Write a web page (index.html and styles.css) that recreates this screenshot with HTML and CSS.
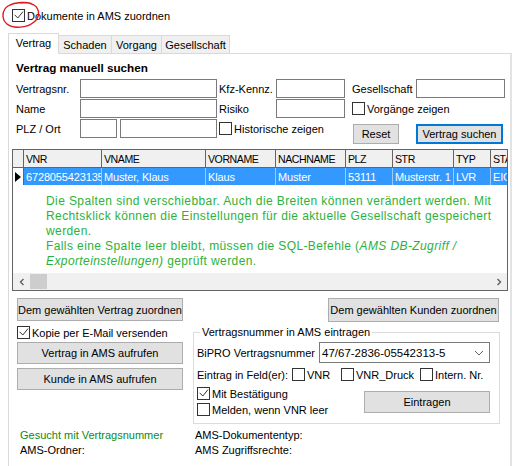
FILE: index.html
```html
<!DOCTYPE html>
<html>
<head>
<meta charset="utf-8">
<link rel="stylesheet" href="styles.css">
</head>
<body>
<div class="app">
  <svg class="annot" width="44" height="32" viewBox="0 0 44 32"><path d="M34 5 C27 1 15 2 8 6 C2 10 1 19 7 24 C13 29 27 28 34 22 C40 17 40 9 34 5 C30 2 25 2 21 3" fill="none" stroke="#e2161d" stroke-width="1.4" stroke-linecap="round"/></svg>

  <div class="topbar">
    <div class="cb"><span class="box"><svg viewBox="0 0 11 11"><path d="M1.6 4.8 L4.8 8 L10 1.6" fill="none" stroke="#333" stroke-width="1"/></svg></span><span>Dokumente in AMS zuordnen</span></div>
  </div>

  <div class="tabs">
    <div class="tab active">Vertrag</div>
    <div class="tab t2">Schaden</div>
    <div class="tab t3">Vorgang</div>
    <div class="tab t4">Gesellschaft</div>
  </div>

  <div class="panel">
    <div class="title">Vertrag manuell suchen</div>

    <div class="form">
      <div class="row">
        <span class="lbl">Vertragsnr.</span>
        <span class="in w137"></span>
        <span class="lbl2">Kfz-Kennz.</span>
        <span class="in w69"></span>
        <span class="lbl3">Gesellschaft</span>
        <span class="in w89"></span>
      </div>
      <div class="row">
        <span class="lbl">Name</span>
        <span class="in w137"></span>
        <span class="lbl2">Risiko</span>
        <span class="in w69"></span>
        <div class="cb ml7"><span class="box"></span><span>Vorgänge zeigen</span></div>
      </div>
      <div class="row row3">
        <span class="lbl h19">PLZ / Ort</span>
        <span class="in w37"></span>
        <span class="in w97 ml3"></span>
        <div class="cb hist"><span class="box"></span><span>Historische zeigen</span></div>
        <div class="btn reset">Reset</div>
        <div class="btn search">Vertrag suchen</div>
      </div>
    </div>

    <div class="grid">
      <div class="ghead">
        <div class="c sel"></div>
        <div class="c cw1">VNR</div>
        <div class="c cw2">VNAME</div>
        <div class="c cw3">VORNAME</div>
        <div class="c cw4">NACHNAME</div>
        <div class="c cw5">PLZ</div>
        <div class="c cw6">STR</div>
        <div class="c cw7">TYP</div>
        <div class="c cw8">STATUS</div>
      </div>
      <div class="grow">
        <div class="c sel"><span class="tri"></span></div>
        <div class="c cw1">6728055423135</div>
        <div class="c cw2">Muster, Klaus</div>
        <div class="c cw3">Klaus</div>
        <div class="c cw4">Muster</div>
        <div class="c cw5">53111</div>
        <div class="c cw6">Musterstr. 1</div>
        <div class="c cw7">LVR</div>
        <div class="c cw8">EIGEN</div>
      </div>
      <div class="gbody">
        <p class="msg">Die Spalten sind verschiebbar. Auch die Breiten können verändert werden. Mit<br>Rechtsklick können die Einstellungen für die aktuelle Gesellschaft gespeichert<br>werden.<br>Falls eine Spalte leer bleibt, müssen die SQL-Befehle (<i>AMS DB-Zugriff /<br>Exporteinstellungen)</i> geprüft werden.</p>
      </div>
      <div class="hscroll">
        <div class="sbtn"><svg width="8" height="8" viewBox="0 0 8 8"><path d="M5.5 1 L2.5 4 L5.5 7" fill="none" stroke="#606060" stroke-width="1.4"/></svg></div>
        <div class="thumb"></div>
        <div class="strack"></div>
        <div class="sbtn"><svg width="8" height="8" viewBox="0 0 8 8"><path d="M2.5 1 L5.5 4 L2.5 7" fill="none" stroke="#606060" stroke-width="1.4"/></svg></div>
      </div>
    </div>

    <div class="bottom">
      <div class="lcol">
        <div class="btn b23">Dem gewählten Vertrag zuordnen</div>
        <div class="cb mt5"><span class="box"><svg viewBox="0 0 11 11"><path d="M1.6 4.8 L4.8 8 L10 1.6" fill="none" stroke="#333" stroke-width="1"/></svg></span><span>Kopie per E-Mail versenden</span></div>
        <div class="btn b22 mt3">Vertrag in AMS aufrufen</div>
        <div class="btn b22 mt4">Kunde in AMS aufrufen</div>
        <div class="info gtext mt38">Gesucht mit Vertragsnummer</div>
        <div class="info">AMS-Ordner:</div>
      </div>
      <div class="rcol">
        <div class="btn kunden">Dem gewählten Kunden zuordnen</div>
        <div class="group">
          <div class="gtitle">Vertragsnummer in AMS eintragen</div>
          <div class="grprow">
            <span class="bipro">BiPRO Vertragsnummer</span>
            <div class="combo"><span>47/67-2836-05542313-5</span><svg width="10" height="6" viewBox="0 0 10 6"><path d="M1 1 L5 5 L9 1" fill="none" stroke="#606060" stroke-width="1"/></svg></div>
          </div>
          <div class="grprow2">
            <span class="feld">Eintrag in Feld(er):</span>
            <div class="cb fvnr"><span class="box"></span><span>VNR</span></div>
            <div class="cb fdruck"><span class="box"></span><span>VNR_Druck</span></div>
            <div class="cb"><span class="box"></span><span>Intern. Nr.</span></div>
          </div>
          <div class="grprow3">
            <div class="opts">
              <div class="cb"><span class="box"><svg viewBox="0 0 11 11"><path d="M1.6 4.8 L4.8 8 L10 1.6" fill="none" stroke="#333" stroke-width="1"/></svg></span><span>Mit Bestätigung</span></div>
              <div class="cb mt3"><span class="box"></span><span>Melden, wenn VNR leer</span></div>
            </div>
            <div class="btn eintragen">Eintragen</div>
          </div>
        </div>
        <div class="info rinfo mt4">AMS-Dokumententyp:</div>
        <div class="info rinfo">AMS Zugriffsrechte:</div>
      </div>
    </div>
  </div>
</div>
</body>
</html>
```

FILE: styles.css
```css
* { box-sizing: border-box; }
body {
  margin: 0;
  background: #fff;
  font-family: "Liberation Sans", Arial, sans-serif;
  font-size: 11px;
  color: #000;
}
.app { position: relative; width: 516px; height: 466px; overflow: hidden; }
.annot { position: absolute; left: 0; top: 0; z-index: 5; }

.topbar { height: 33px; padding: 9px 0 0 12px; font-size: 11px; }

.cb { display: flex; align-items: center; gap: 2px; white-space: nowrap; height: 13px; }
.box {
  width: 13px; height: 13px; flex: none;
  border: 1px solid #333; background: #fff;
  display: flex;
}
.box svg { width: 11px; height: 11px; display: block; }

.tabs { display: flex; align-items: flex-end; height: 20px; margin-left: 8px; }
.tab {
  height: 18px;
  border-top: 1px solid #d9d9d9;
  border-right: 1px solid #d9d9d9;
  background: #f0f0f0;
  display: flex; align-items: center; justify-content: center;
  padding-top: 1px;
}
.tab.active {
  width: 51px; height: 21px; margin-bottom: -1px;
  border-left: 1px solid #d9d9d9;
  background: #fff;
  position: relative; z-index: 1;
  padding: 0 0 3px 0;
}
.t2 { width: 53px; }
.t3 { width: 50px; }
.t4 { width: 68px; }

.panel {
  margin-left: 8px;
  width: 504px; height: 420px;
  border: 1px solid #d9d9d9;
  border-right: 2px solid #e3e3e3;
  background: #fff;
  padding: 7px 0 0 7px;
}
.title { font-weight: bold; font-size: 11.7px; line-height: 14px; height: 14px; }

.form { margin-top: 4px; }
.row { display: flex; align-items: center; height: 19px; margin-top: 1px; }
.row:first-child { margin-top: 0; }
.row3 { align-items: flex-start; height: 25px; }
.lbl { width: 64px; flex: none; }
.h19 { height: 19px; display: flex; align-items: center; }
.lbl2 { width: 57px; margin-left: 2px; flex: none; }
.lbl3 { width: 64px; margin-left: 7px; flex: none; }
.in { height: 19px; border: 1px solid #7a7a7a; background: #fff; flex: none; }
.w137 { width: 137px; }
.w69 { width: 69px; }
.w89 { width: 89px; }
.w37 { width: 37px; }
.w97 { width: 97px; }
.ml3 { margin-left: 3px; }
.ml7 { margin-left: 7px; }
.hist { margin-left: 2px; width: 134px; margin-top: 3px; }

.btn {
  background: #e1e1e1;
  border: 1px solid #adadad;
  display: flex; align-items: center; justify-content: center;
  white-space: nowrap; flex: none;
}
.reset { width: 46px; height: 20px; margin-top: 5px; }
.search { width: 87px; height: 20px; margin-top: 5px; margin-left: 17px; border: 2px solid #0078d7; }

.grid {
  margin: 5px 0 0 -4px;
  width: 496px; height: 142px;
  border: 1px solid #646464;
  display: flex; flex-direction: column;
  overflow: hidden;
  font-size: 11px;
}
.ghead, .grow { display: flex; flex: none; }
.ghead { height: 18px; background: #f0f0f0; border-bottom: 1px solid #646464; font-size: 10.6px; letter-spacing: -0.45px; }
.grow { height: 17px; background: #3399ff; color: #fff; }
.c {
  flex: none; height: 100%;
  border-right: 1px solid #646464;
  padding-left: 2px;
  white-space: nowrap; overflow: hidden;
  display: flex; align-items: center;
}
.grow .c { border-right-color: #9fccf7; letter-spacing: -0.15px; }
.grow .c.sel { background: #fff; border-right-color: #646464; padding-left: 2px; }
.sel { width: 11px; }
.cw1 { width: 78px; }
.cw2 { width: 104px; }
.cw3 { width: 70px; }
.cw4 { width: 70px; }
.cw5 { width: 47px; }
.cw6 { width: 61px; }
.cw7 { width: 37px; }
.cw8 { width: 30px; border-right: none; }
.tri {
  width: 0; height: 0;
  border-left: 6px solid #000;
  border-top: 5px solid transparent;
  border-bottom: 5px solid transparent;
}
.gbody { flex: 1; background: #fff; }
.msg {
  margin: 9px 0 0 33px;
  font-size: 12px; line-height: 15px;
  letter-spacing: 0.4px;
  color: #2bb23a;
  white-space: nowrap;
}
.hscroll { height: 17px; flex: none; background: #f0f0f0; display: flex; align-items: center; }
.sbtn { width: 17px; height: 17px; display: flex; align-items: center; justify-content: center; flex: none; }
.thumb { width: 17px; height: 15px; background: #cdcdcd; flex: none; }
.strack { flex: 1; }

.bottom { display: flex; margin-top: 7px; margin-left: 1px; }
.lcol { width: 166px; display: flex; flex-direction: column; flex: none; }
.b23 { height: 23px; }
.b22 { height: 22px; }
.mt3 { margin-top: 3px; }
.mt4 { margin-top: 4px; }
.mt5 { margin-top: 5px; }
.mt38 { margin-top: 38px; }
.info { line-height: 15px; height: 15px; padding-left: 3px; white-space: nowrap; }
.gtext { color: #0b8a16; }

.rcol { width: 307px; margin-left: 10px; display: flex; flex-direction: column; flex: none; }
.kunden { align-self: flex-end; width: 171px; height: 24px; margin-right: 1px; }
.group {
  margin-top: 10px;
  height: 92px;
  border: 1px solid #dcdcdc;
  padding-left: 3px;
  display: flex; flex-direction: column;
}
.gtitle {
  align-self: flex-start;
  margin: -8px 0 0 3px;
  padding: 0 2px;
  background: #fff;
  line-height: 15px; height: 15px;
}
.grprow { display: flex; align-items: center; height: 21px; margin-top: 2px; }
.bipro { width: 122px; flex: none; }
.combo {
  width: 171px; height: 21px; flex: none;
  border: 1px solid #7a7a7a; background: #fff;
  display: flex; align-items: center; justify-content: space-between;
  padding: 0 5px 0 2px;
  font-size: 11.5px;
}
.grprow2 { display: flex; align-items: center; height: 13px; margin-top: 5px; }
.feld { width: 95px; flex: none; }
.fvnr { width: 49px; flex: none; }
.fdruck { width: 79px; flex: none; }
.grprow3 { display: flex; margin-top: 6px; }
.opts { width: 167px; flex: none; display: flex; flex-direction: column; }
.eintragen { width: 126px; height: 22px; margin-top: 4px; }
.rinfo { padding-left: 2px; }
```
